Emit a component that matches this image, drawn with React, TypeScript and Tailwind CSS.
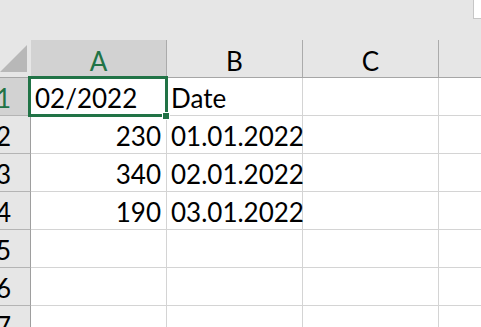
import React from "react";

const rows: { n: number; a: string; b: string }[] = [
  { n: 1, a: "02/2022", b: "Date" },
  { n: 2, a: "230", b: "01.01.2022" },
  { n: 3, a: "340", b: "02.01.2022" },
  { n: 4, a: "190", b: "03.01.2022" },
  { n: 5, a: "", b: "" },
  { n: 6, a: "", b: "" },
  { n: 7, a: "", b: "" },
];

export default function App() {
  return (
    <div className="w-[481px] h-[327px] overflow-hidden bg-white relative font-['Lato',sans-serif] text-[26px] leading-none text-black">
      <div className="h-[40px] bg-[#e6e6e6] flex justify-end">
        <div className="w-[8px] h-[19px] bg-white border-l border-b border-[#c6c6c6]" />
      </div>
      <div className="flex h-[38px] bg-[#e6e6e6] border-b border-[#a6a6a6]">
        <div className="w-[31px] shrink-0 relative">
          <svg width="31" height="37" className="absolute left-0 top-0">
            <polygon points="27,5 27,32 0,32" fill="#b8b8b8" />
          </svg>
        </div>
        <div className="w-[136px] shrink-0 border-r border-[#ababab] bg-[#d2d2d2] text-[#217346] flex items-end justify-center pb-[3px]">
          A
        </div>
        <div className="w-[136px] shrink-0 border-r border-[#ababab] flex items-end justify-center pb-[3px]">
          B
        </div>
        <div className="w-[136px] shrink-0 border-r border-[#ababab] flex items-end justify-center pb-[3px]">
          C
        </div>
        <div className="flex-1" />
      </div>
      {rows.map((r) => (
        <div key={r.n} className="flex h-[38px]">
          <div
            className={
              r.n === 1
                ? "w-[31px] shrink-0 border-r border-b border-r-[#9e9e9e] border-b-[#b4b4b4] bg-[#d2d2d2] text-[#217346] flex items-end justify-end pr-[19px] pb-[4px] overflow-hidden"
                : "w-[31px] shrink-0 border-r border-b border-r-[#9e9e9e] border-b-[#b4b4b4] bg-[#e6e6e6] flex items-end justify-end pr-[19px] pb-[4px] overflow-hidden"
            }
          >
            {r.n}
          </div>
          <div
            className={
              r.n === 1
                ? "w-[136px] shrink-0 border-r border-b border-[#d4d4d4] flex items-end justify-start pl-[4px] pb-[4px] whitespace-nowrap"
                : "w-[136px] shrink-0 border-r border-b border-[#d4d4d4] flex items-end justify-end pr-[5px] pb-[4px] whitespace-nowrap"
            }
          >
            {r.a}
          </div>
          <div className="w-[136px] shrink-0 border-r border-b border-[#d4d4d4] flex items-end justify-start pl-[4px] pb-[4px] whitespace-nowrap">
            {r.b}
          </div>
          <div className="w-[136px] shrink-0 border-r border-b border-[#d4d4d4]" />
          <div className="flex-1 border-b border-[#d4d4d4]" />
        </div>
      ))}
      <div className="absolute left-[28px] top-[76px] w-[140px] h-[41px] border-[3px] border-[#217346] pointer-events-none" />
      <div className="absolute left-[162px] top-[112px] w-[8px] h-[8px] bg-[#217346] border border-white" />
    </div>
  );
}
